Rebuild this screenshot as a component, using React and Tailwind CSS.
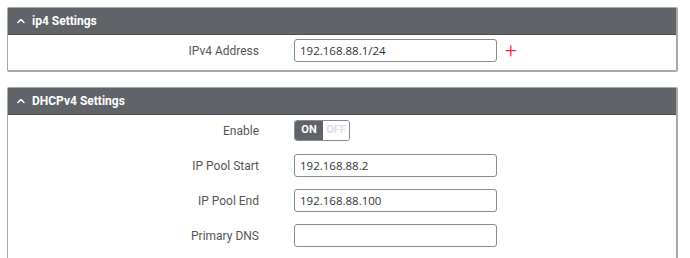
import { ChevronUp } from "lucide-react";

function Panel({ title, children, bodyClass }) {
  return (
    <div className="border border-[#a8a8a8] border-b-2 border-r-2 rounded-[2px] bg-white">
      <div className="h-[27px] bg-[#606368] border-b border-[#4c4f53] flex items-center pl-[7px] gap-[5px] text-white">
        <ChevronUp size={12} strokeWidth={3} />
        <span className="text-[12px] font-bold">{title}</span>
      </div>
      <div className={bodyClass}>{children}</div>
    </div>
  );
}

function Row({ label, children }) {
  return (
    <div className="flex items-center h-[23px]">
      <div className="w-[252px] text-right text-[12px] text-[#555] pr-[1px]">{label}</div>
      <div className="ml-[34px] flex items-center">{children}</div>
    </div>
  );
}

function Field({ value }) {
  return (
    <div className="w-[203px] h-[23px] border border-[#8a8a8a] rounded-[3px] bg-white flex items-center px-[5px] text-[11.5px] text-[#333] font-['Open_Sans',sans-serif]">
      {value}
    </div>
  );
}

export default function App() {
  return (
    <div className="w-[690px] h-[258px] overflow-hidden bg-white font-['Roboto',sans-serif]">
      <div className="pl-[7px] pr-[12px] pt-[7px] flex flex-col gap-[15px]">
        <Panel title="ip4 Settings" bodyClass="pt-[4px] pb-[8px]">
          <Row label="IPv4 Address">
            <Field value="192.168.88.1/24" />
            <span className="ml-[8px] text-[#ff2020] text-[21px] leading-none font-light">+</span>
          </Row>
        </Panel>
        <Panel title="DHCPv4 Settings" bodyClass="pt-[4px] pb-[30px] flex flex-col gap-[12px]">
          <Row label="Enable">
            <div className="flex h-[21px] w-[56px] border border-[#8a8a8a] rounded-[3px] overflow-hidden text-[11px] font-bold">
              <div className="w-[28px] bg-[#606368] text-white flex items-center justify-center">ON</div>
              <div className="flex-1 bg-white text-[#dcdcec] flex items-center justify-center">OFF</div>
            </div>
          </Row>
          <Row label="IP Pool Start">
            <Field value="192.168.88.2" />
          </Row>
          <Row label="IP Pool End">
            <Field value="192.168.88.100" />
          </Row>
          <Row label="Primary DNS">
            <Field value="" />
          </Row>
        </Panel>
      </div>
    </div>
  );
}
